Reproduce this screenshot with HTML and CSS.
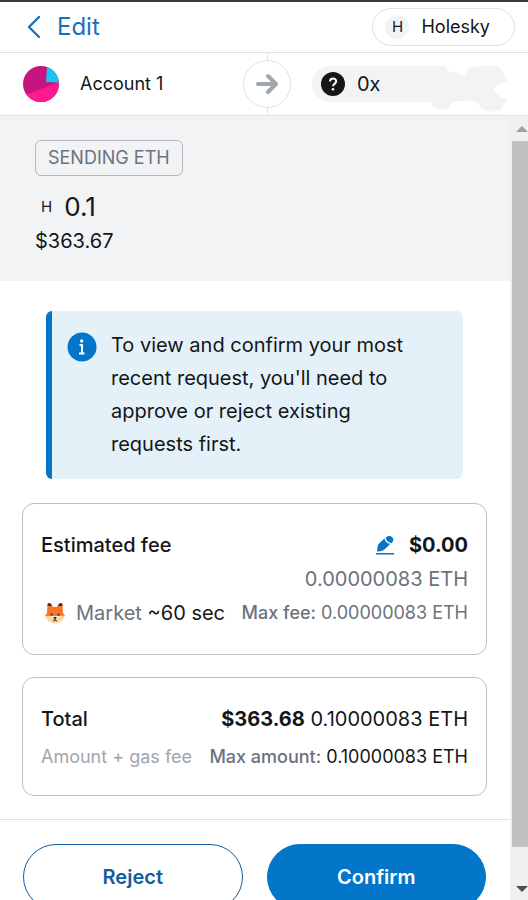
FILE: index.html
```html
<!DOCTYPE html>
<html lang="en">
<head>
<meta charset="utf-8">
<meta name="viewport" content="width=device-width, initial-scale=1">
<title>Confirm transaction</title>
<link rel="stylesheet" href="styles.css">
</head>
<body>
<header class="topbar">
  <a class="edit" href="#">
    <svg width="14" height="24" viewBox="0 0 14 24" fill="none" stroke="currentColor" stroke-width="2.4" stroke-linecap="round" stroke-linejoin="round" aria-hidden="true"><path d="M12 2 2 12l10 10"/></svg>
    <span>Edit</span>
  </a>
  <button class="network" type="button"><span class="network-icon">H</span><span>Holesky</span></button>
</header>
<section class="accounts">
  <div class="sender">
    <svg width="36" height="36" viewBox="0 0 36 36" aria-hidden="true">
      <defs><clipPath id="disc"><circle cx="18" cy="18" r="18"/></clipPath></defs>
      <g clip-path="url(#disc)"><path fill="#c8147f" d="M0 0h36v36H0z"/><path fill="#fb1a90" d="M0 30 36 16v20H0z"/><path fill="#1ac4f0" d="M24 0h12v16.500L23 16z"/><path fill="#f3202c" d="M10 35.200h16V36H10z"/></g>
    </svg>
    <span>Account 1</span>
  </div>
  <div class="divider"><span class="arrow">
    <svg width="24" height="22" viewBox="0 0 24 22" fill="none" stroke="#9fa6ae" stroke-width="4" stroke-linecap="round" stroke-linejoin="round" aria-hidden="true"><path d="M3 11h18M13 3l8 8-8 8"/></svg>
  </span></div>
  <div class="recipient">
    <svg class="recipient-shape" width="200" height="54" viewBox="0 0 200 54" aria-hidden="true"><path fill="#f2f3f5" d="M18 6H134Q135 12 141 12Q146 12 151 16Q157 14 156 8Q160 8 165 6H181Q192 6 195 22Q184 23 182 30Q185 37 197 40Q193 42 191 46C188 54 172 53 168 46Q162 39 154 41H143Q138 43 137 48Q128 52 120 47L119 42H18A18 18 0 0 1 18 6z"/></svg>
    <svg class="question" width="24" height="24" viewBox="0 0 24 24" aria-hidden="true"><circle cx="12" cy="12" r="12" fill="#141618"/><path d="M9 9.500c0-4 6.200-4 6.200-.2 0 2.200-3.100 2.500-3.100 5" fill="none" stroke="#fff" stroke-width="2"/><circle cx="12" cy="17.200" r="1.300" fill="#fff"/></svg>
    <span>0x</span>
  </div>
</section>
<div class="viewport">
  <main>
    <section class="summary">
      <div class="action">SENDING ETH</div>
      <div class="amount"><span class="token">H</span><span>0.1</span></div>
      <div class="fiat">$363.67</div>
    </section>
    <div class="alert" role="status">
      <svg width="30" height="30" viewBox="0 0 30 30" aria-hidden="true"><circle cx="15" cy="15" r="14.500" fill="#0376c9"/><circle cx="14.700" cy="9" r="1.700" fill="#fff"/><path d="M12.500 13h2.500v8M12 21.500h5.500" fill="none" stroke="#fff" stroke-width="2"/></svg>
      <p>To view and confirm your most recent request, you'll need to approve or reject existing requests first.</p>
    </div>
    <section class="card">
      <div class="row"><h2>Estimated fee</h2>
        <div class="fee"><button class="pencil" type="button" aria-label="Edit fee"><svg width="20" height="20" viewBox="0 0 20 20" aria-hidden="true"><g fill="#0376c9"><path d="M2 16.500 2.500 12Q3 9.500 5 7.500L9.500 3.500Q10.500 8 15 9L10.500 13.500Q8 16 5.500 16.300z"/><path d="M10.800 2.600C14-1.500 21 3 17.300 7.200L16.200 8.200Q11 7 10.800 2.600z"/><path d="M1 18h18v1.500H1z"/></g></svg></button><strong>$0.00</strong></div>
      </div>
      <div class="row end muted">0.00000083 ETH</div>
      <div class="row">
        <div class="speed">
          <svg width="22" height="22" viewBox="0 0 22 22" aria-hidden="true"><path fill="#f5772b" d="M3.500 2Q4 .5 6 1q2 1 3 4h4q1-3 3-4 2-.5 2.500 1l.5 9 2 3H1l2-3z"/><path fill="#383438" d="M3.500 4Q3.500 1 5 1q2 .2 3 3zM18.500 4q0-3-1.500-3-2 .2-3 3z"/><path fill="#ffd39c" d="M1 14q5-1 8 1.500l2-2 2 2q3-2.500 8-1.500-2.500 7-10 7.500Q3.500 21 1 14z"/><g fill="#30272a"><circle cx="7.500" cy="12.500" r="1"/><circle cx="14.500" cy="12.500" r="1"/><path d="M9 15h4l-2 2z"/></g><path d="M11 16v2m-2 1 2-1 2 1" stroke="#30272a" fill="none"/></svg>
          <span><span class="muted">Market</span> ~60 sec</span>
        </div>
        <div class="small muted"><b>Max fee:</b> 0.00000083 ETH</div>
      </div>
    </section>
    <section class="card total">
      <div class="row"><h2>Total</h2><div><strong>$363.68</strong> 0.10000083 ETH</div></div>
      <div class="row small"><span class="hint">Amount + gas fee</span><span><b class="muted">Max amount:</b> 0.10000083 ETH</span></div>
    </section>
    <footer class="actions"><button class="reject" type="button">Reject</button><button class="confirm" type="button">Confirm</button></footer>
  </main>
  <div class="scrollbar" aria-hidden="true"><span class="up"></span><span class="thumb"></span><span class="down"></span></div>
</div>
</body>
</html>
```
FILE: styles.css
```css
* { box-sizing: border-box; }
body {
  display: flex;
  flex-direction: column;
  height: 100vh;
  margin: 0;
  overflow: hidden;
  border-top: 2px solid #3b3a3c;
  background: #fff;
  color: #141618;
  font: 20px/24px Inter, "Liberation Sans", sans-serif;
}
button { font: inherit; color: inherit; cursor: pointer; }
p, h2 { margin: 0; }
svg { display: block; flex: none; }
.topbar {
  display: flex;
  flex: none;
  align-items: center;
  justify-content: space-between;
  height: 51px;
  padding: 0 13px 0 27px;
  border-bottom: 1px solid #dfe1e4;
}
.edit {
  display: flex;
  align-items: center;
  gap: 16px;
  color: #1870b8;
  font-size: 24px;
  text-decoration: none;
}
.network {
  display: flex;
  align-items: center;
  gap: 12px;
  height: 38px;
  padding: 0 24px 0 12px;
  border: 1px solid #dfe1e4;
  border-radius: 20px;
  background: #fff;
  font-size: 18px;
}
.network-icon {
  width: 24px;
  border-radius: 50%;
  background: #f2f3f5;
  font-size: 15px;
  text-align: center;
}
.accounts {
  display: grid;
  flex: none;
  grid-template-columns: 1fr 48px 1fr;
  height: 63px;
  border-bottom: 1px solid #dfe1e4;
  font-size: 18px;
}
.sender { display: flex; align-items: center; gap: 21px; padding-left: 23px; }
.divider {
  display: grid;
  place-items: center;
  width: 54px;
  background: linear-gradient(#dfe1e4, #dfe1e4) center / 1px 100% no-repeat;
}
.arrow {
  display: grid;
  place-items: center;
  width: 48px;
  height: 48px;
  border: 1px solid #dfe1e4;
  border-radius: 50%;
  background: #fff;
}
.recipient {
  position: relative;
  display: flex;
  align-items: center;
  gap: 12px;
  padding-left: 33px;
  font-size: 20px;
}
.recipient-shape { position: absolute; top: 7px; left: 24px; }
.question, .recipient span { position: relative; }
.viewport { display: flex; flex: 1; min-height: 0; }
main { flex: 1; min-width: 0; overflow: hidden; }
.summary {
  display: flex;
  flex-direction: column;
  align-items: flex-start;
  padding: 24px 35px 28px;
  background: #f2f3f5;
}
.action {
  padding: 5px 12px;
  border: 1px solid #b5b9be;
  border-radius: 6px;
  color: #6a737d;
  font-size: 18px;
}
.amount {
  display: flex;
  align-items: center;
  gap: 12px;
  margin-top: 15px;
  padding-left: 6px;
  font-size: 26px;
  line-height: 32px;
}
.token { font-size: 15px; }
.fiat { margin-top: 6px; }
.alert {
  display: flex;
  gap: 14px;
  margin: 30px 47px 24px 46px;
  padding: 18px 36px 18px 15px;
  border-left: 6px solid #0376c9;
  border-radius: 6px;
  background: #e4f1f9;
  line-height: 33px;
}
.alert svg { margin-top: 3px; }
.card {
  display: flex;
  flex-direction: column;
  gap: 10px;
  margin: 0 23px 22px 22px;
  padding: 29px 18px;
  border: 1px solid #bbc0c5;
  border-radius: 12px;
}
.row { display: flex; align-items: center; justify-content: space-between; white-space: nowrap; }
.end { justify-content: flex-end; }
h2 { font-size: 20px; font-weight: 500; }
.muted { color: #6a737d; }
.fee { display: flex; align-items: center; gap: 14px; }
.pencil { padding: 0; border: 0; background: none; }
.speed { display: flex; align-items: center; gap: 10px; padding-left: 3px; }
.small { font-size: 18px; }
b { font-weight: 500; }
.hint { color: #9fa6ae; }
.total { gap: 14px; margin-bottom: 23px; padding-bottom: 26px; }
.actions {
  display: grid;
  grid-template-columns: 1fr 1fr;
  gap: 24px;
  padding: 24px 24px 24px 23px;
  border-top: 1px solid #dfe1e4;
}
.actions button {
  height: 66px;
  border: 1px solid #0376c9;
  border-radius: 33px;
  font-weight: 600;
}
.actions .reject { border-color: #145d9c; background: #fff; color: #145d9c; }
.actions .confirm { background: #0376c9; color: #fff; }
.scrollbar {
  display: flex;
  flex: none;
  flex-direction: column;
  align-items: flex-end;
  width: 18px;
  background: #f0f0f0;
}
.up, .down {
  width: 12px;
  height: 6px;
  background: #505050;
  clip-path: polygon(0 0, 100% 0, 50% 100%);
}
.up { margin: 10px 0 9px; background: #a0a0a0; clip-path: polygon(50% 0, 100% 100%, 0 100%); }
.thumb { flex: 1; width: 16px; background: #c1c1c1; }
.down { margin: 39px 0 8px; }
```
